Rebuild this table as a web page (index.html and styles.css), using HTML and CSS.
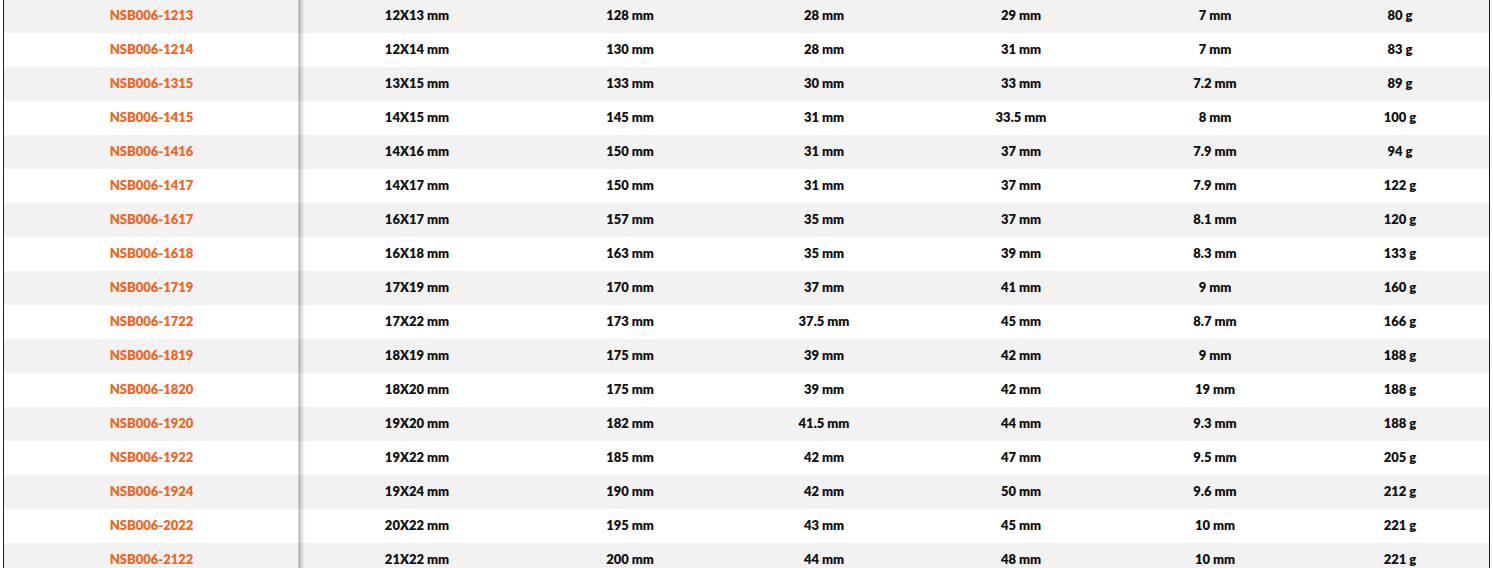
FILE: index.html
```html
<!DOCTYPE html>
<html>
<head>
<meta charset="utf-8">
<link rel="stylesheet" href="styles.css">
</head>
<body>
<div class="wrap">
<table class="spec">
<colgroup>
<col class="c1"><col class="c2"><col class="c3"><col class="c4"><col class="c5"><col class="c6"><col class="c7">
</colgroup>
<tbody>
<tr><td class="code">NSB006-1213</td><td>12X13 mm</td><td>128 mm</td><td>28 mm</td><td>29 mm</td><td>7 mm</td><td>80 g</td></tr>
<tr><td class="code">NSB006-1214</td><td>12X14 mm</td><td>130 mm</td><td>28 mm</td><td>31 mm</td><td>7 mm</td><td>83 g</td></tr>
<tr><td class="code">NSB006-1315</td><td>13X15 mm</td><td>133 mm</td><td>30 mm</td><td>33 mm</td><td>7.2 mm</td><td>89 g</td></tr>
<tr><td class="code">NSB006-1415</td><td>14X15 mm</td><td>145 mm</td><td>31 mm</td><td>33.5 mm</td><td>8 mm</td><td>100 g</td></tr>
<tr><td class="code">NSB006-1416</td><td>14X16 mm</td><td>150 mm</td><td>31 mm</td><td>37 mm</td><td>7.9 mm</td><td>94 g</td></tr>
<tr><td class="code">NSB006-1417</td><td>14X17 mm</td><td>150 mm</td><td>31 mm</td><td>37 mm</td><td>7.9 mm</td><td>122 g</td></tr>
<tr><td class="code">NSB006-1617</td><td>16X17 mm</td><td>157 mm</td><td>35 mm</td><td>37 mm</td><td>8.1 mm</td><td>120 g</td></tr>
<tr><td class="code">NSB006-1618</td><td>16X18 mm</td><td>163 mm</td><td>35 mm</td><td>39 mm</td><td>8.3 mm</td><td>133 g</td></tr>
<tr><td class="code">NSB006-1719</td><td>17X19 mm</td><td>170 mm</td><td>37 mm</td><td>41 mm</td><td>9 mm</td><td>160 g</td></tr>
<tr><td class="code">NSB006-1722</td><td>17X22 mm</td><td>173 mm</td><td>37.5 mm</td><td>45 mm</td><td>8.7 mm</td><td>166 g</td></tr>
<tr><td class="code">NSB006-1819</td><td>18X19 mm</td><td>175 mm</td><td>39 mm</td><td>42 mm</td><td>9 mm</td><td>188 g</td></tr>
<tr><td class="code">NSB006-1820</td><td>18X20 mm</td><td>175 mm</td><td>39 mm</td><td>42 mm</td><td>19 mm</td><td>188 g</td></tr>
<tr><td class="code">NSB006-1920</td><td>19X20 mm</td><td>182 mm</td><td>41.5 mm</td><td>44 mm</td><td>9.3 mm</td><td>188 g</td></tr>
<tr><td class="code">NSB006-1922</td><td>19X22 mm</td><td>185 mm</td><td>42 mm</td><td>47 mm</td><td>9.5 mm</td><td>205 g</td></tr>
<tr><td class="code">NSB006-1924</td><td>19X24 mm</td><td>190 mm</td><td>42 mm</td><td>50 mm</td><td>9.6 mm</td><td>212 g</td></tr>
<tr><td class="code">NSB006-2022</td><td>20X22 mm</td><td>195 mm</td><td>43 mm</td><td>45 mm</td><td>10 mm</td><td>221 g</td></tr>
<tr><td class="code">NSB006-2122</td><td>21X22 mm</td><td>200 mm</td><td>44 mm</td><td>48 mm</td><td>10 mm</td><td>221 g</td></tr>
</tbody>
</table>
</div>
</body>
</html>
```

FILE: styles.css
```css
html, body {
  margin: 0;
  padding: 0;
  background: #ffffff;
  overflow: hidden;
}

.wrap {
  margin-left: 3px;
  margin-top: -1px;
  width: 1485px;
  border-left: 1px solid #1e1e1e;
  border-right: 1px solid #1e1e1e;
}

.spec {
  width: 100%;
  border-collapse: collapse;
  table-layout: fixed;
  font-family: "Lato", "Open Sans", sans-serif;
  font-weight: 800;
  font-size: 13px;
  color: #111111;
}

.c1 { width: 295px; }
.c2 { width: 236px; }
.c3 { width: 190px; }
.c4 { width: 198px; }
.c5 { width: 196px; }
.c6 { width: 192px; }
.c7 { width: 178px; }

.spec td {
  height: 32px;
  padding: 0 0 2px;
  text-align: center;
  vertical-align: middle;
}

.spec tr:nth-child(odd) td {
  background: #f2f2f2;
}

.spec td.code {
  color: #f26522;
  position: relative;
}

.spec td.code::after {
  content: "";
  position: absolute;
  top: 0;
  bottom: 0;
  right: -6px;
  width: 7px;
  background: linear-gradient(to right, rgba(0, 0, 0, 0.12), rgba(0, 0, 0, 0.26) 20%, rgba(0, 0, 0, 0.12) 50%, rgba(0, 0, 0, 0));
}
```
